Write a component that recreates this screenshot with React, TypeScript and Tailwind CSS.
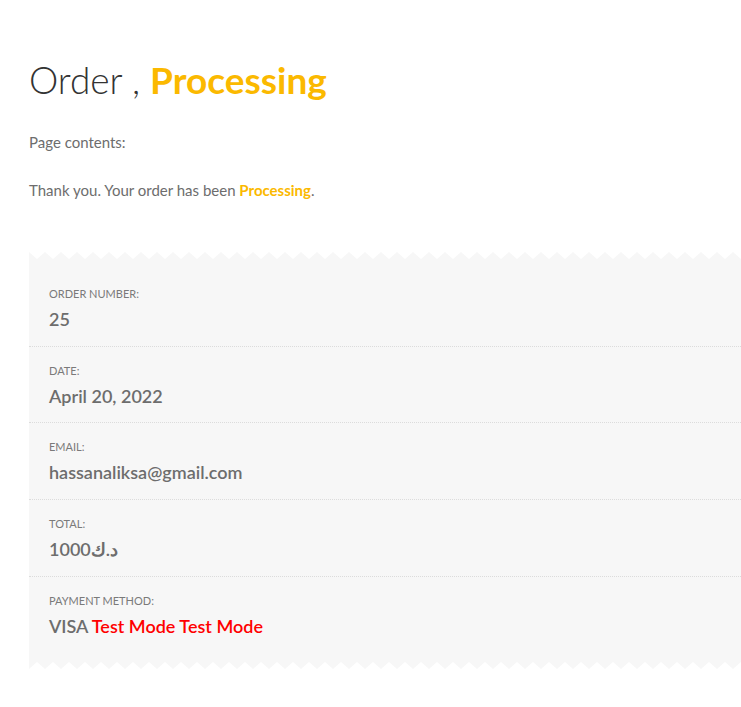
const rows = [
  { label: "Order number:", value: <>25</> },
  { label: "Date:", value: <>April 20, 2022</> },
  { label: "Email:", value: <>hassanaliksa@gmail.com</> },
  { label: "Total:", value: <>1000د.ك</> },
  {
    label: "Payment method:",
    value: (
      <>
        VISA <span className="text-[#ff0000]">Test Mode Test Mode</span>
      </>
    ),
  },
];

const Zigzag = ({ flip }: { flip?: boolean }) => (
  <svg className="block w-full h-[7px]" preserveAspectRatio="none">
    <defs>
      <pattern id={flip ? "zzb" : "zzt"} width="16" height="7" patternUnits="userSpaceOnUse">
        {flip ? (
          <>
            <polygon points="-8,0 8,0 0,7" fill="#f7f7f7" />
            <polygon points="8,0 24,0 16,7" fill="#f7f7f7" />
          </>
        ) : (
          <>
            <polygon points="0,0 8,7 -8,7" fill="#f7f7f7" />
            <polygon points="16,0 24,7 8,7" fill="#f7f7f7" />
          </>
        )}
      </pattern>
    </defs>
    <rect width="100%" height="7" fill={`url(#${flip ? "zzb" : "zzt"})`} />
  </svg>
);

export default function App() {
  return (
    <div className="min-h-[707px] bg-white pl-[29px] pt-[58px] font-['Lato',sans-serif] text-[#6d6d6d] overflow-hidden">
      <h1 className="text-[37px] leading-[44px] font-light text-[#333]">
        Order , <span className="font-bold text-[#fbb900]">Processing</span>
      </h1>
      <p className="mt-[28px] text-[15px] leading-6">Page contents:</p>
      <p className="mt-[24px] text-[15px] leading-6">
        Thank you. Your order has been{" "}
        <span className="font-bold text-[#fbb900]">Processing</span>.
      </p>

      <div className="mt-[50px] w-[712px]">
        <Zigzag />
        <div className="bg-[#f7f7f7] pt-[11px] pb-[10px]">
          {rows.map((row, i) => (
            <div
              key={row.label}
              className={`px-5 pt-[16px] pb-[14.7px] ${i < rows.length - 1 ? "border-b border-dotted border-[#dcdcdc]" : ""}`}
            >
              <div className="text-[11px] leading-4 uppercase text-[#7a7a7a]">{row.label}</div>
              <div className="mt-[5px] text-[18px] leading-6 font-semibold text-[#6d6d6d]">{row.value}</div>
            </div>
          ))}
        </div>
        <Zigzag flip />
      </div>
    </div>
  );
}
